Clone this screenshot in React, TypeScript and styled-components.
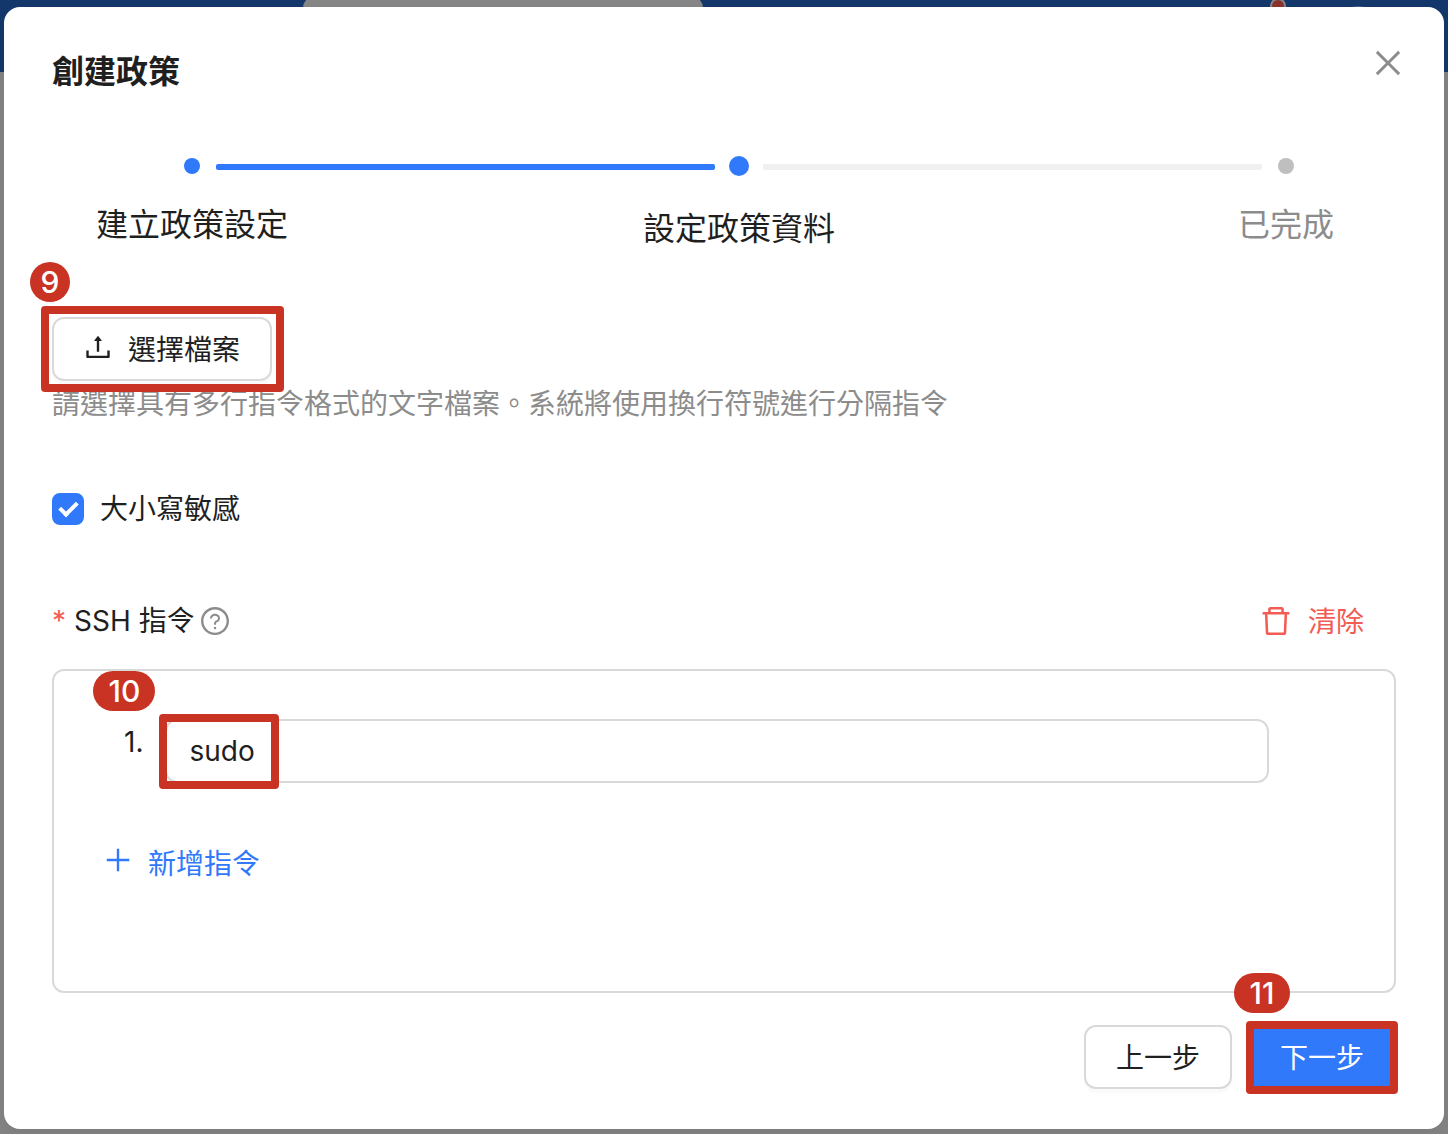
import React, { useState } from "react";
import styled, { createGlobalStyle, css } from "styled-components";
import {
  AiOutlineClose,
  AiOutlineDelete,
  AiOutlinePlus,
  AiOutlineQuestionCircle,
  AiOutlineUpload,
} from "react-icons/ai";

const color = {
  text: "#1f1f1f",
  muted: "#8c8c8c",
  primary: "#2f79fa",
  danger: "#f25c54",
  border: "#d9d9d9",
  mark: "#c93323",
};

const GlobalStyle = createGlobalStyle`
  *, *::before, *::after { box-sizing: border-box; }
  body {
    margin: 0;
    color: ${color.text};
    font-family: Inter, "Noto Sans CJK TC", sans-serif;
    font-size: 28px;
    line-height: 46px;
  }
  button, input { font: inherit; color: inherit; }
`;

const Page = styled.div`
  display: grid;
  min-height: 100vh;
  background: #858585;
`;

const TopBar = styled.header`
  grid-area: 1 / 1;
  align-self: start;
  display: flex;
  height: 72px;
  padding: 0 74px 0 303px;
  background: #14386b;
`;

const SearchField = styled.div`
  width: 400px;
  height: 56px;
  margin: -4px auto 0 0;
  border-radius: 12px;
  background: #878787;
`;

const NoticeDot = styled.span`
  width: 16px;
  height: 16px;
  margin: -2px 56px 0 0;
  border: 2px solid #878787;
  border-radius: 50%;
  background: #8c322e;
`;

const Avatar = styled.span`
  width: 32px;
  height: 32px;
  margin: 6px 0 0;
  border-radius: 50%;
  background: #4d6589;
`;

const Overlay = styled.div`
  grid-area: 1 / 1;
  display: grid;
  padding: 7px 4px 5px;
`;

const Dialog = styled.section`
  display: flex;
  flex-direction: column;
  padding: 40px 48px;
  border-radius: 16px;
  background: #fff;
  box-shadow: 0 8px 24px rgba(0, 0, 0, 0.08);
`;

const DialogHead = styled.div`
  display: flex;
  justify-content: space-between;
  align-items: flex-start;
`;

const Title = styled.h1`
  margin: 0;
  font-size: 32px;
  line-height: 50px;
  font-weight: 700;
`;

const CloseButton = styled.button`
  display: flex;
  margin: -2px -10px 0 0;
  padding: 0;
  border: 0;
  background: none;
  color: ${color.muted};
  font-size: 36px;
`;

const Steps = styled.ol`
  display: flex;
  align-items: flex-start;
  margin: 59px -30px 0 0;
  padding: 0;
  list-style: none;
`;

type StepState = "done" | "current" | "waiting";

const Step = styled.li<{ $state: StepState }>`
  display: flex;
  flex: none;
  flex-direction: column;
  align-items: center;
  width: 280px;
  font-size: 32px;
  line-height: 50px;
  color: ${(p) => (p.$state === "waiting" ? color.muted : color.text)};
`;

const StepDot = styled.span<{ $state: StepState }>`
  border-radius: 50%;
  background: ${(p) => (p.$state === "waiting" ? "#bfbfbf" : color.primary)};
  ${(p) =>
    p.$state === "current"
      ? css`
          width: 20px;
          height: 20px;
          margin-bottom: 28px;
        `
      : css`
          width: 16px;
          height: 16px;
          margin: 2px 0 26px;
        `}
`;

const Connector = styled.li<{ $done?: boolean }>`
  flex: 1;
  height: 6px;
  margin: 8px -116px 0;
  border-radius: 2px;
  background: ${(p) => (p.$done ? color.primary : "#f0f0f0")};
`;

const Marked = styled.div`
  position: relative;
  display: flex;
`;

const Frame = styled.span`
  position: absolute;
  z-index: 1;
  border: 8px solid ${color.mark};
  border-radius: 4px;
  pointer-events: none;
`;

const FileFrame = styled(Frame)`
  inset: -11px -12px -11px -11px;
`;

const CommandFrame = styled(Frame)`
  top: -5px;
  left: -6px;
  width: 120px;
  height: 75px;
`;

const NextFrame = styled(Frame)`
  inset: -4px -2px -5px;
`;

const Badge = styled.span<{ $top: number; $left: number; $width: number }>`
  position: absolute;
  z-index: 2;
  top: ${(p) => p.$top}px;
  left: ${(p) => p.$left}px;
  width: ${(p) => p.$width}px;
  height: 40px;
  border-radius: 20px;
  background: ${color.mark};
  color: #fff;
  font-size: 30px;
  font-weight: 500;
  line-height: 40px;
  text-align: center;
`;

const Button = styled.button<{ $primary?: boolean }>`
  display: inline-flex;
  align-items: center;
  justify-content: center;
  gap: 16px;
  height: 64px;
  padding: 2px 30px 0;
  border: 2px solid ${(p) => (p.$primary ? color.primary : color.border)};
  border-radius: 12px;
  background: ${(p) => (p.$primary ? color.primary : "#fff")};
  color: ${(p) => (p.$primary ? "#fff" : color.text)};
  box-shadow: 0 4px 0 rgba(0, 0, 0, 0.02);
  white-space: nowrap;

  svg {
    margin: 0 -2px 6px;
    font-size: 32px;
  }
`;

const TextButton = styled.button<{ $danger?: boolean }>`
  display: inline-flex;
  align-items: center;
  gap: 16px;
  height: 64px;
  padding: 2px 32px 0;
  border: 0;
  background: none;
  color: ${(p) => (p.$danger ? color.danger : color.primary)};

  svg {
    margin: 0 -2px ${(p) => (p.$danger ? 2 : 8)}px;
    font-size: ${(p) => (p.$danger ? 36 : 32)}px;
  }
`;

const FileRow = styled.div`
  display: flex;
  margin-top: 63px;
`;

const Hint = styled.p`
  margin: 0;
  color: ${color.muted};
`;

const CheckRow = styled.label`
  display: flex;
  align-items: center;
  align-self: flex-start;
  gap: 16px;
  margin-top: 59px;
`;

const CheckInput = styled.input`
  display: grid;
  place-items: center;
  width: 32px;
  height: 32px;
  margin: 0;
  border: 2px solid ${color.border};
  border-radius: 8px;
  appearance: none;

  &:checked {
    border-color: ${color.primary};
    background: ${color.primary};
  }

  &:checked::after {
    content: "";
    width: 11px;
    height: 18px;
    border: solid #fff;
    border-width: 0 4px 4px 0;
    transform: translateY(-2px) rotate(45deg);
  }
`;

const FieldHead = styled.div`
  display: flex;
  align-items: center;
  justify-content: space-between;
  margin-top: 57px;
`;

const FieldLabel = styled.span`
  display: flex;
  align-items: center;
  gap: 8px;

  svg {
    margin: 0 -4px;
    color: ${color.muted};
    font-size: 32px;
  }
`;

const Required = styled.span`
  color: ${color.danger};
`;

const CommandBox = styled.div`
  display: flex;
  flex: 1;
  flex-direction: column;
  align-items: flex-start;
  min-height: 324px;
  margin-top: 16px;
  padding: 48px 125px 48px 18px;
  border: 2px solid ${color.border};
  border-radius: 12px;
`;

const CommandList = styled.ol`
  align-self: stretch;
  margin: 0 0 48px;
  padding: 0;
  list-style: none;
`;

const CommandItem = styled.li`
  display: flex;
  gap: 22px;
  padding-left: 52px;
`;

const CommandField = styled(Marked)`
  flex: 1;
`;

const CommandInput = styled.input`
  flex: 1;
  min-width: 0;
  height: 64px;
  padding: 0 22px;
  border: 2px solid ${color.border};
  border-radius: 12px;
  background: #fff;
`;

const Footer = styled.div`
  display: flex;
  justify-content: flex-end;
  gap: 16px;
  margin-top: 32px;
`;

export default function App() {
  const [caseSensitive, setCaseSensitive] = useState(true);
  const [commands, setCommands] = useState(["sudo"]);

  const updateCommand = (index: number, value: string) =>
    setCommands(commands.map((c, i) => (i === index ? value : c)));

  return (
    <>
      <GlobalStyle />
      <Page>
        <TopBar>
          <SearchField />
          <NoticeDot />
          <Avatar />
        </TopBar>
        <Overlay>
          <Dialog role="dialog" aria-labelledby="dialog-title">
            <DialogHead>
              <Title id="dialog-title">創建政策</Title>
              <CloseButton type="button" aria-label="關閉">
                <AiOutlineClose />
              </CloseButton>
            </DialogHead>

            <Steps>
              <Step $state="done">
                <StepDot $state="done" />
                建立政策設定
              </Step>
              <Connector $done aria-hidden="true" />
              <Step $state="current" aria-current="step">
                <StepDot $state="current" />
                設定政策資料
              </Step>
              <Connector aria-hidden="true" />
              <Step $state="waiting">
                <StepDot $state="waiting" />
                已完成
              </Step>
            </Steps>

            <FileRow>
              <Marked>
                <Button type="button">
                  <AiOutlineUpload />
                  選擇檔案
                </Button>
                <FileFrame />
                <Badge $top={-55} $left={-22} $width={40}>9</Badge>
              </Marked>
            </FileRow>
            <Hint>請選擇具有多行指令格式的文字檔案。系統將使用換行符號進行分隔指令</Hint>

            <CheckRow>
              <CheckInput
                type="checkbox"
                checked={caseSensitive}
                onChange={(e) => setCaseSensitive(e.target.checked)}
              />
              大小寫敏感
            </CheckRow>

            <FieldHead>
              <FieldLabel id="command-label">
                <Required>*</Required>
                SSH 指令
                <AiOutlineQuestionCircle />
              </FieldLabel>
              <TextButton type="button" $danger onClick={() => setCommands([""])}>
                <AiOutlineDelete />
                清除
              </TextButton>
            </FieldHead>

            <CommandBox>
              <CommandList>
                {commands.map((command, i) => (
                  <CommandItem key={i}>
                    <span>{i + 1}.</span>
                    <CommandField>
                      <CommandInput
                        type="text"
                        aria-labelledby="command-label"
                        value={command}
                        onChange={(e) => updateCommand(i, e.target.value)}
                      />
                      {i === 0 && (
                        <>
                          <CommandFrame />
                          <Badge $top={-48} $left={-72} $width={62}>10</Badge>
                        </>
                      )}
                    </CommandField>
                  </CommandItem>
                ))}
              </CommandList>
              <TextButton type="button" onClick={() => setCommands([...commands, ""])}>
                <AiOutlinePlus />
                新增指令
              </TextButton>
            </CommandBox>

            <Footer>
              <Button type="button">上一步</Button>
              <Marked>
                <Button type="button" $primary>下一步</Button>
                <NextFrame />
                <Badge $top={-52} $left={-14} $width={56}>11</Badge>
              </Marked>
            </Footer>
          </Dialog>
        </Overlay>
      </Page>
    </>
  );
}
